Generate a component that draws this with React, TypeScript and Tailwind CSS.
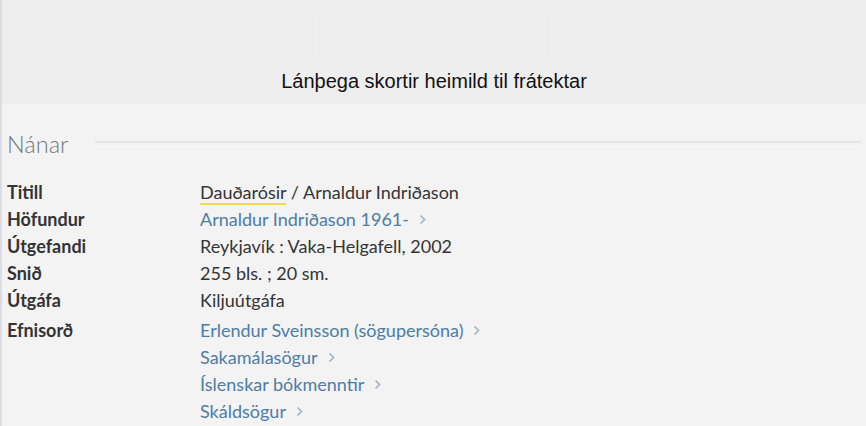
import React from "react";

const font = { fontFamily: '"Lato", "Noto Sans", sans-serif' };

function Chevron() {
  return (
    <svg className="ml-[10px] inline-block h-[11px] w-[7px] text-[#a3b4c6]" viewBox="0 0 7 11" fill="none">
      <path d="M1.5 1.5 5.5 5.5 1.5 9.5" stroke="currentColor" strokeWidth="1.7" />
    </svg>
  );
}

function Link({ children }: { children: React.ReactNode }) {
  return (
    <span className="inline-flex items-center text-[#4d7ca7]">
      {children}
      <Chevron />
    </span>
  );
}

type Row = { label?: string; value: React.ReactNode; gap?: boolean };

const rows: Row[] = [
  {
    label: "Titill",
    value: (
      <span>
        <span className="border-b-2 border-[#f3d950]">Dauðarósir</span> / Arnaldur Indriðason
      </span>
    ),
  },
  { label: "Höfundur", value: <Link>Arnaldur Indriðason 1961-</Link> },
  { label: "Útgefandi", value: "Reykjavík : Vaka-Helgafell, 2002" },
  { label: "Snið", value: "255 bls. ; 20 sm." },
  { label: "Útgáfa", value: "Kiljuútgáfa" },
  { label: "Efnisorð", value: <Link>Erlendur Sveinsson (sögupersóna)</Link>, gap: true },
  { value: <Link>Sakamálasögur</Link> },
  { value: <Link>Íslenskar bókmenntir</Link> },
  { value: <Link>Skáldsögur</Link> },
];

export default function App() {
  return (
    <div className="flex h-[426px] w-[866px] overflow-hidden bg-[#f3f3f3]">
      <div className="w-[2px] shrink-0 bg-[#dcdce6]" />
      <div className="flex min-w-0 flex-1 flex-col">
        <div className="flex h-[104px] flex-col items-center bg-[#eeeeee]">
          <div className="mr-[9px] mt-[13px] h-[48px] w-[234px] border border-[#ebebeb] bg-[#eeeeee]" />
          <p
            className="mt-[8px] text-[20px] leading-[24px] text-[#111]"
            style={{ fontFamily: '"Liberation Sans", Arial, sans-serif' }}
          >
            Lánþega skortir heimild til frátektar
          </p>
        </div>
        <div className="px-[5px]" style={font}>
          <div className="mt-[25px] flex items-center">
            <h2 className="text-[23.5px] font-light leading-[30px] text-[#777]">Nánar</h2>
            <div className="ml-[27px] flex-1">
              <div className="h-[2px] bg-[#e4e4e4]" />
              <div className="mt-[3px] h-px bg-[#f8f8f8]" />
            </div>
          </div>
          <div className="mt-[20px] text-[18px] text-[#353535]">
            {rows.map((r, i) => (
              <div key={i} className={`flex h-[27px] items-center ${r.gap ? "mt-[3px]" : ""}`}>
                <div className="w-[193px] shrink-0 font-bold text-[#333]">{r.label}</div>
                <div>{r.value}</div>
              </div>
            ))}
          </div>
        </div>
      </div>
    </div>
  );
}
